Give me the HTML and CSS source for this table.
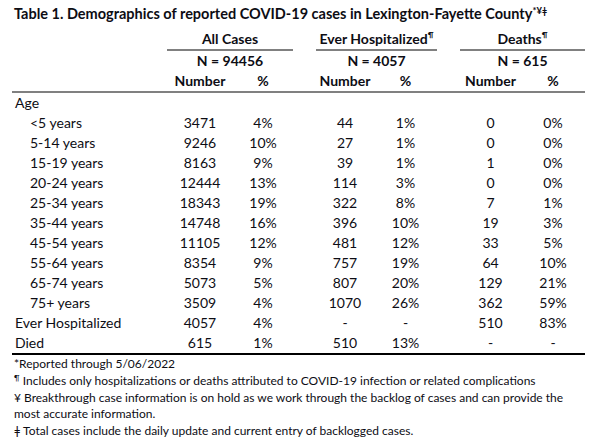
FILE: index.html
```html
<!DOCTYPE html>
<html>
<head>
<meta charset="utf-8">
<link rel="stylesheet" href="styles.css">
</head>
<body>
<div class="page">
  <div class="title">Table 1. Demographics of reported COVID-19 cases in Lexington-Fayette County<sup>*¥ǂ</sup></div>
  <table class="tbl">
    <colgroup>
      <col class="c-label"><col class="c-n1"><col class="c-p1"><col class="c-gap">
      <col class="c-n2"><col class="c-p2"><col class="c-gap">
      <col class="c-n3"><col class="c-p3">
    </colgroup>
    <thead>
      <tr>
        <th></th>
        <th colspan="2" class="grp">All Cases</th>
        <th></th>
        <th colspan="2" class="grp">Ever Hospitalized<sup>¶</sup></th>
        <th></th>
        <th colspan="2" class="grp">Deaths<sup>¶</sup></th>
      </tr>
      <tr>
        <th></th>
        <th colspan="2">N = 94456</th>
        <th></th>
        <th colspan="2">N = 4057</th>
        <th></th>
        <th colspan="2">N = 615</th>
      </tr>
      <tr class="sub">
        <th></th>
        <th>Number</th><th>%</th><th></th>
        <th>Number</th><th>%</th><th></th>
        <th>Number</th><th>%</th>
      </tr>
    </thead>
    <tbody>
      <tr><td class="lbl">Age</td><td></td><td></td><td></td><td></td><td></td><td></td><td></td><td></td></tr>
      <tr><td class="lbl ind">&lt;5 years</td><td>3471</td><td>4%</td><td></td><td>44</td><td>1%</td><td></td><td>0</td><td>0%</td></tr>
      <tr><td class="lbl ind">5-14 years</td><td>9246</td><td>10%</td><td></td><td>27</td><td>1%</td><td></td><td>0</td><td>0%</td></tr>
      <tr><td class="lbl ind">15-19 years</td><td>8163</td><td>9%</td><td></td><td>39</td><td>1%</td><td></td><td>1</td><td>0%</td></tr>
      <tr><td class="lbl ind">20-24 years</td><td>12444</td><td>13%</td><td></td><td>114</td><td>3%</td><td></td><td>0</td><td>0%</td></tr>
      <tr><td class="lbl ind">25-34 years</td><td>18343</td><td>19%</td><td></td><td>322</td><td>8%</td><td></td><td>7</td><td>1%</td></tr>
      <tr><td class="lbl ind">35-44 years</td><td>14748</td><td>16%</td><td></td><td>396</td><td>10%</td><td></td><td>19</td><td>3%</td></tr>
      <tr><td class="lbl ind">45-54 years</td><td>11105</td><td>12%</td><td></td><td>481</td><td>12%</td><td></td><td>33</td><td>5%</td></tr>
      <tr><td class="lbl ind">55-64 years</td><td>8354</td><td>9%</td><td></td><td>757</td><td>19%</td><td></td><td>64</td><td>10%</td></tr>
      <tr><td class="lbl ind">65-74 years</td><td>5073</td><td>5%</td><td></td><td>807</td><td>20%</td><td></td><td>129</td><td>21%</td></tr>
      <tr><td class="lbl ind">75+ years</td><td>3509</td><td>4%</td><td></td><td>1070</td><td>26%</td><td></td><td>362</td><td>59%</td></tr>
      <tr><td class="lbl">Ever Hospitalized</td><td>4057</td><td>4%</td><td></td><td>-</td><td>-</td><td></td><td>510</td><td>83%</td></tr>
      <tr class="last"><td class="lbl">Died</td><td>615</td><td>1%</td><td></td><td>510</td><td>13%</td><td></td><td>-</td><td>-</td></tr>
    </tbody>
  </table>
  <div class="notes">
    <p>*Reported through 5/06/2022</p>
    <p><sup>¶</sup> Includes only hospitalizations or deaths attributed to COVID-19 infection or related complications</p>
    <p>¥ Breakthrough case information is on hold as we work through the backlog of cases and can provide the most accurate information.</p>
    <p>ǂ Total cases include the daily update and current entry of backlogged cases.</p>
  </div>
</div>
</body>
</html>
```
FILE: styles.css
```css
html, body {
  margin: 0;
  padding: 0;
  background: #ffffff;
}
.page {
  font-family: Lato, "Open Sans", "Liberation Sans", sans-serif;
  color: #0d0d14;
  width: 600px;
  height: 446px;
  overflow: hidden;
}
.title {
  font-weight: bold;
  font-size: 14.5px;
  line-height: 16px;
  padding: 6px 0 7px 14px;
  white-space: nowrap;
}
.title sup {
  font-size: 9.5px;
  line-height: 0;
  vertical-align: 5px;
}
.tbl {
  margin-left: 12px;
  border-collapse: collapse;
  table-layout: fixed;
  width: 573px;
  font-size: 14px;
}
.c-label { width: 155px; }
.c-n1 { width: 66px; }
.c-p1 { width: 60px; }
.c-gap { width: 23px; }
.c-n2 { width: 58px; }
.c-p2 { width: 63px; }
.c-n3 { width: 61px; }
.c-p3 { width: 64px; }
.tbl th, .tbl td {
  padding: 0;
  height: 20px;
  line-height: 18px;
  text-align: center;
  white-space: nowrap;
}
.tbl th {
  font-weight: bold;
}
.tbl th sup {
  font-size: 8px;
  line-height: 0;
  vertical-align: 6px;
}
.tbl th.grp {
  border-bottom: 2px solid #808080;
}
.tbl tr.sub th {
  border-bottom: 2px solid #808080;
}
.tbl td.lbl {
  text-align: left;
  padding-left: 3px;
}
.tbl td.ind {
  padding-left: 18px;
}
.tbl tr.last td {
  border-bottom: 2px solid #000000;
}
.notes {
  margin: 1px 0 0 14px;
  width: 565px;
  font-size: 12px;
  line-height: 16.8px;
}
.notes p {
  margin: 0;
}
.notes sup {
  font-size: 8px;
  line-height: 0;
  vertical-align: 4px;
}
```
